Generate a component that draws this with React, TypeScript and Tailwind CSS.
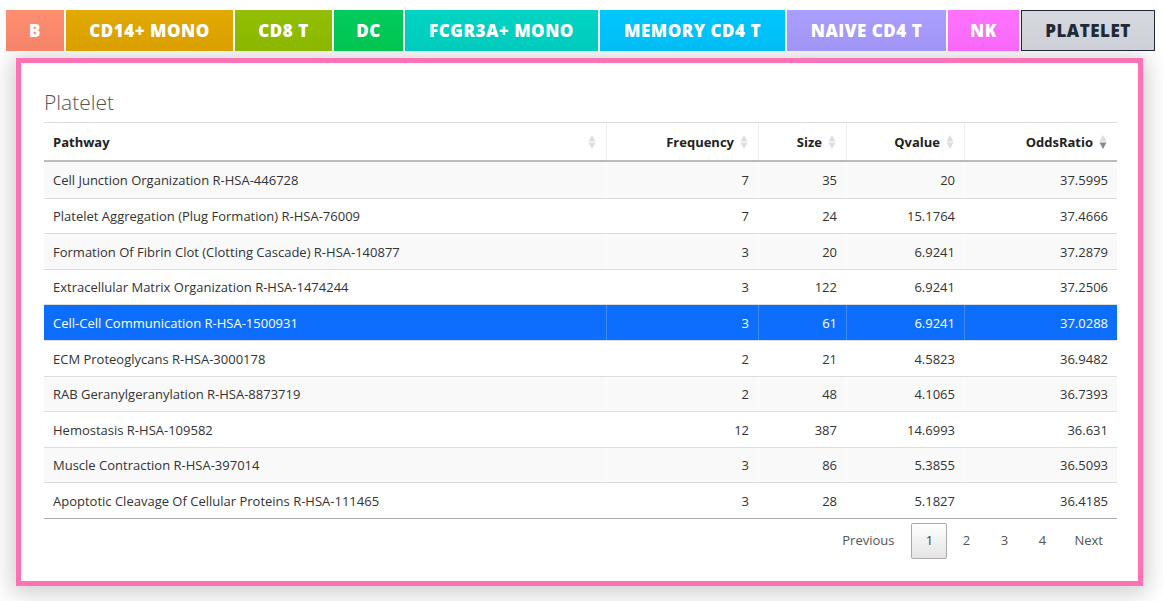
import React from "react";

const tabs = [
  { label: "B", cls: "w-[58px] bg-gradient-to-b from-[#ff8f6f] to-[#f4846a] text-white" },
  { label: "CD14+ MONO", cls: "w-[167px] bg-gradient-to-b from-[#e2a900] to-[#d9a000] text-white" },
  { label: "CD8 T", cls: "w-[97px] bg-gradient-to-b from-[#93be00] to-[#8ab800] text-white" },
  { label: "DC", cls: "w-[69px] bg-gradient-to-b from-[#00cc5c] to-[#00c452] text-white" },
  { label: "FCGR3A+ MONO", cls: "w-[193px] bg-gradient-to-b from-[#00d4c4] to-[#00cbbd] text-white" },
  { label: "MEMORY CD4 T", cls: "w-[185px] bg-gradient-to-b from-[#00c8ff] to-[#00bdf4] text-white" },
  { label: "NAIVE CD4 T", cls: "w-[159px] bg-gradient-to-b from-[#aa9fff] to-[#a095f4] text-white" },
  { label: "NK", cls: "w-[71px] bg-gradient-to-b from-[#ff72ff] to-[#f868f8] text-white" },
];

const rows = [
  ["Cell Junction Organization R-HSA-446728", "7", "35", "20", "37.5995"],
  ["Platelet Aggregation (Plug Formation) R-HSA-76009", "7", "24", "15.1764", "37.4666"],
  ["Formation Of Fibrin Clot (Clotting Cascade) R-HSA-140877", "3", "20", "6.9241", "37.2879"],
  ["Extracellular Matrix Organization R-HSA-1474244", "3", "122", "6.9241", "37.2506"],
  ["Cell-Cell Communication R-HSA-1500931", "3", "61", "6.9241", "37.0288"],
  ["ECM Proteoglycans R-HSA-3000178", "2", "21", "4.5823", "36.9482"],
  ["RAB Geranylgeranylation R-HSA-8873719", "2", "48", "4.1065", "36.7393"],
  ["Hemostasis R-HSA-109582", "12", "387", "14.6993", "36.631"],
  ["Muscle Contraction R-HSA-397014", "3", "86", "5.3855", "36.5093"],
  ["Apoptotic Cleavage Of Cellular Proteins R-HSA-111465", "3", "28", "5.1827", "36.4185"],
];

const cols = [
  { name: "Pathway", w: "w-[562px]", align: "text-left" },
  { name: "Frequency", w: "w-[152px]", align: "text-right" },
  { name: "Size", w: "w-[88px]", align: "text-right" },
  { name: "Qvalue", w: "w-[118px]", align: "text-right" },
  { name: "OddsRatio", w: "w-[153px]", align: "text-right" },
];

function SortIcon({ active }: { active?: boolean }) {
  return (
    <svg width="8" height="16" viewBox="0 0 8 16" className="absolute right-[10px] top-1/2 -translate-y-1/2">
      <path d="M4 1 L7.5 7.5 L0.5 7.5 Z" fill="#dddddd" />
      <path d="M4 15 L7.5 8.5 L0.5 8.5 Z" fill={active ? "#8a8a8a" : "#dddddd"} />
    </svg>
  );
}

export default function App() {
  return (
    <div className="min-h-[601px] bg-white" style={{ fontFamily: "'Open Sans', 'Noto Sans', sans-serif" }}>
      {/* Tabs */}
      <div className="flex gap-[2px] pl-[6px] pt-[10px]">
        {tabs.map((t) => (
          <div
            key={t.label}
            className={`${t.cls} h-[41px] flex items-center justify-center text-[17px] font-extrabold tracking-[0.03em]`}
          >
            {t.label}
          </div>
        ))}
        <div className="w-[134px] h-[41px] flex items-center justify-center border-[1.5px] border-[#1f2a37] bg-gradient-to-b from-[#d6d9de] to-[#cdd0d6] text-[#1f2a37] text-[17px] font-extrabold tracking-[0.03em]">
          PLATELET
        </div>
      </div>

      {/* Card */}
      <div className="ml-[16px] mt-[7px] w-[1127px] border-[5px] border-[#ff72b6] bg-white shadow-[0_3px_22px_4px_rgba(0,0,0,0.2)] pl-[23px] pr-[21px] pt-[25px] pb-[22px]">
        <h2 className="text-[21px] font-light text-[#555] leading-[28px] mb-[6px]">Platelet</h2>

        <div className="border-t border-[#ddd] text-[13px] text-[#333]">
          {/* header */}
          <div className="flex h-[39px] border-b-2 border-[#bbb] font-bold text-[#222]">
            {cols.map((c, i) => (
              <div
                key={c.name}
                className={`${c.w} ${c.align} relative flex items-center pt-[3px] ${i === 0 ? "pl-[9px]" : "justify-end border-l border-[#efefef]"} pr-[24px]`}
              >
                {c.name}
                <SortIcon active={i === 4} />
              </div>
            ))}
          </div>

          {/* rows */}
          {rows.map((r, ri) => {
            const sel = ri === 4;
            const bg = sel ? "bg-[#0d6efd] text-white" : ri % 2 === 0 ? "bg-[#f9f9f9]" : "bg-white";
            return (
              <div key={ri} className={`flex h-[35.6px] ${ri > 0 ? "border-t border-[#ddd]" : ""} ${bg}`}>
                {r.map((v, ci) => (
                  <div
                    key={ci}
                    className={`${cols[ci].w} flex items-center pt-[2px] ${ci === 0 ? "pl-[9px]" : `justify-end pr-[9px] border-l ${sel ? "border-white/20" : "border-white/70"}`}`}
                  >
                    {v}
                  </div>
                ))}
              </div>
            );
          })}
          <div className="border-t border-[#aaa]" />
        </div>

        {/* pagination */}
        <div className="flex justify-end items-center mt-[4px] text-[13px] text-[#555] pr-[1px]">
          <span className="px-[13px] py-[7px]">Previous</span>
          <span className="ml-[4px] w-[36px] h-[36px] flex items-center justify-center border border-[#aaa] rounded-[2px] bg-gradient-to-b from-white to-[#e4e4e4] text-[#444]">
            1
          </span>
          <span className="w-[38px] text-center py-[7px]">2</span>
          <span className="w-[38px] text-center py-[7px]">3</span>
          <span className="w-[38px] text-center py-[7px]">4</span>
          <span className="px-[13px] py-[7px]">Next</span>
        </div>
      </div>
    </div>
  );
}
